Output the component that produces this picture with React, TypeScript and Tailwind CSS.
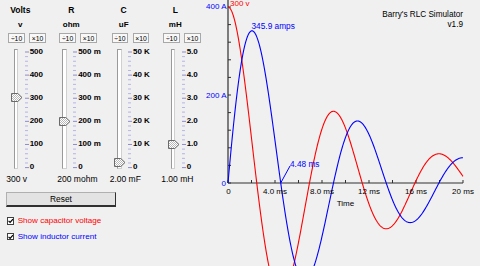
import React from "react";

type Col = {
  name: string;
  unit: string;
  labels: string[];
  frac: number;
  value: string;
  w: string;
  ml: string;
};

const cols: Col[] = [
  { name: "Volts", unit: "v", labels: ["500", "400", "300", "200", "100", "0"], frac: 0.6, value: "300 v", w: "w-[51px]", ml: "ml-[2.7px]" },
  { name: "R", unit: "ohm", labels: ["500 m", "400 m", "300 m", "200 m", "100 m", "0"], frac: 0.4, value: "200 mohm", w: "w-[52.4px]", ml: "ml-[0.2px]" },
  { name: "C", unit: "uF", labels: ["50 K", "40 K", "30 K", "20 K", "10 K", "0"], frac: 0.04, value: "2.00 mF", w: "w-[51.6px]", ml: "ml-[2.6px]" },
  { name: "L", unit: "mH", labels: ["5.0", "4.0", "3.0", "2.0", "1.0", "0"], frac: 0.2, value: "1.00 mH", w: "w-[40px]", ml: "ml-[4.7px]" },
];

function Thumb() {
  return (
    <svg width="11.5" height="9" viewBox="0 0 11.5 9">
      <defs>
        <pattern id="chk" width="2" height="2" patternUnits="userSpaceOnUse">
          <rect width="2" height="2" fill="#ffffff" />
          <rect width="1" height="1" fill="#b8b8b8" />
          <rect x="1" y="1" width="1" height="1" fill="#b8b8b8" />
        </pattern>
      </defs>
      <path d="M0.5,0.5 H6.8 L11,4.5 L6.8,8.5 H0.5 Z" fill="url(#chk)" stroke="#6a6a6a" strokeWidth="1" />
    </svg>
  );
}

function Ticks() {
  const ticks = [];
  for (let k = 0; k <= 25; k++) {
    const y = 4 + (k * 115.6) / 25;
    const major = k % 5 === 0;
    ticks.push(
      <line
        key={k}
        x1={0}
        x2={major ? 4 : 3}
        y1={y}
        y2={y}
        stroke={major ? "#8a8ad0" : "#b4b4e6"}
        strokeWidth={1}
      />
    );
  }
  return (
    <svg width="4" height="123.6" viewBox="0 0 4 123.6" className="ml-[2.7px] shrink-0">
      {ticks}
    </svg>
  );
}

function Column({ c }: { c: Col }) {
  const thumbTop = 4 + (1 - c.frac) * 115.6 - 4.5;
  return (
    <div className={`${c.w} shrink-0 flex flex-col`}>
      <div className="w-[24px] h-[20px] leading-[20px] text-center text-[8.5px] font-bold whitespace-nowrap">{c.name}</div>
      <div className="w-[24px] h-[9px] leading-[9px] text-center text-[8px] font-bold whitespace-nowrap">{c.unit}</div>
      <div className="mt-[3.5px] flex gap-[4.5px]">
        <div className="w-[16.5px] h-[10.5px] border border-[#a8a8a8] bg-[#f8f8f8] text-[6.8px] leading-[9px] text-center">÷10</div>
        <div className="w-[16.5px] h-[10.5px] border border-[#a8a8a8] bg-[#f8f8f8] text-[6.8px] leading-[9px] text-center">×10</div>
      </div>
      <div className={`${c.ml} mt-[4.7px] h-[123.6px] flex items-start`}>
        <div className="w-[11px] h-full relative shrink-0">
          <div className="ml-[3px] mt-[1.8px] w-[4.5px] h-[120px] border border-[#9a9a9a] border-r-[#d0d0d0] border-b-[#d0d0d0] bg-white" />
          <div className="absolute left-0" style={{ top: thumbTop }}>
            <Thumb />
          </div>
        </div>
        <Ticks />
        <div className="ml-[1px] h-full flex flex-col justify-between">
          {c.labels.map((l) => (
            <div key={l} className="h-[8px] leading-[8px] text-[8px] font-bold whitespace-nowrap">{l}</div>
          ))}
        </div>
      </div>
      <div className="mt-[4px] ml-[-2px] h-[9px] leading-[9px] text-[8.5px] whitespace-nowrap">{c.value}</div>
    </div>
  );
}

function CheckRow({ label, color, mt }: { label: string; color: string; mt: string }) {
  return (
    <div className={`${mt} h-[10px] pl-[6.7px] flex items-center`}>
      <div className="w-[7.5px] h-[7.5px] border border-[#404040] bg-white flex items-center justify-center shrink-0">
        <svg width="6" height="6" viewBox="0 0 6 6">
          <path d="M0.6,2.8 L2.3,4.6 L5.4,1" fill="none" stroke="#000" strokeWidth="1.3" />
        </svg>
      </div>
      <span className={`${color} ml-[3.5px] text-[8.1px] leading-[10px] whitespace-nowrap`}>{label}</span>
    </div>
  );
}

function Chart() {
  const N = 500;
  let ip = "";
  let vp = "";
  for (let k = 0; k <= N; k++) {
    const t = (20 * k) / N;
    const ts = t / 1000;
    const e = Math.exp(-100 * ts);
    const s = Math.sin(700 * ts);
    const co = Math.cos(700 * ts);
    const i = (300 / 0.7) * e * s;
    const v = 300 * e * (co + s / 7);
    const x = 228 + t * 11.75;
    ip += (k ? "L" : "M") + x.toFixed(2) + "," + (183 - i * 0.44).toFixed(2);
    vp += (k ? "L" : "M") + x.toFixed(2) + "," + (183 - (v * 176) / 300).toFixed(2);
  }
  const yt = [];
  for (let k = 0; k <= 10; k++) {
    const y = 183 - k * 17.6;
    yt.push(<line key={"y" + k} x1={228} x2={231} y1={y} y2={y} stroke="#303030" strokeWidth={1} />);
  }
  const xt = [];
  for (let k = 0; k <= 10; k++) {
    const x = 228 + k * 23.5;
    xt.push(<line key={"x" + k} x1={x} x2={x} y1={180} y2={183} stroke="#303030" strokeWidth={1} />);
  }
  const xl: [string, number][] = [
    ["0", 228.5],
    ["4.0 ms", 275],
    ["8.0 ms", 322],
    ["12 ms", 369],
    ["16 ms", 416],
    ["20 ms", 463],
  ];
  return (
    <svg width="275" height="266" viewBox="205 0 275 266" className="shrink-0">
      <line x1={228} x2={228} y1={0} y2={183} stroke="#303030" strokeWidth={1.2} />
      <line x1={228} x2={463} y1={183} y2={183} stroke="#303030" strokeWidth={1.2} />
      {yt}
      {xt}
      <path d={vp} fill="none" stroke="#ff0000" strokeWidth={1.1} />
      <path d={ip} fill="none" stroke="#0000ff" strokeWidth={1.1} />
      <line x1={280.7} y1={183} x2={290} y2={166} stroke="#0000ff" strokeWidth={1} />
      <text x={230} y={5.5} fontSize={8} fill="#ff0000">300 v</text>
      <text x={226.5} y={9} fontSize={8} fill="#0000ff" textAnchor="end">400 A</text>
      <text x={226.5} y={97.5} fontSize={8} fill="#0000ff" textAnchor="end">200 A</text>
      <text x={226} y={186} fontSize={8} fill="#0000ff" textAnchor="end">0</text>
      <text x={251.5} y={29} fontSize={8.3} fill="#0000ff">345.9 amps</text>
      <text x={290} y={166.5} fontSize={8.3} fill="#0000ff">4.48 ms</text>
      {xl.map(([t, x]) => (
        <text key={t} x={x} y={193.5} fontSize={8} fill="#000" textAnchor="middle">{t}</text>
      ))}
      <text x={345.5} y={205.5} fontSize={8} fill="#000" textAnchor="middle">Time</text>
    </svg>
  );
}

export default function App() {
  return (
    <div className="w-[480px] h-[266px] bg-[#f0f0f0] flex overflow-hidden relative font-['Liberation_Sans',Arial,sans-serif] text-black">
      <div className="w-[205px] flex flex-col shrink-0">
        <div className="flex pl-[8.3px]">
          {cols.map((c) => (
            <Column key={c.name} c={c} />
          ))}
        </div>
        <button className="mt-[7.4px] ml-[6px] w-[110px] h-[15.6px] bg-[#e3e3e3] border border-b-2 border-t-[#b0b0b0] border-l-[#b0b0b0] border-r-[#303030] border-b-[#303030] flex items-center justify-center text-[8.4px] leading-none">
          Reset
        </button>
        <CheckRow label="Show capacitor voltage" color="text-[#ff0000]" mt="mt-[8.7px]" />
        <CheckRow label="Show inductor current" color="text-[#0000ff]" mt="mt-[5.7px]" />
      </div>
      <Chart />
      <div className="absolute top-[10px] right-[17px] text-right text-[8.2px] leading-[9.6px] whitespace-nowrap">
        Barry's RLC Simulator
        <br />
        v1.9
      </div>
    </div>
  );
}
